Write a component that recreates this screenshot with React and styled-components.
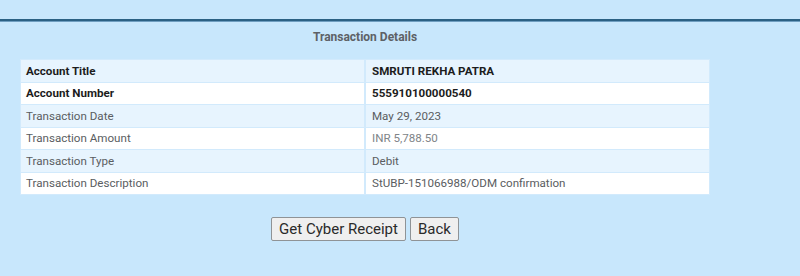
import React from "react";
import styled, { createGlobalStyle } from "styled-components";

const GlobalStyle = createGlobalStyle`
  html, body {
    margin: 0;
    padding: 0;
    background: #c8e7fc;
    font-family: Roboto, "Liberation Sans", Arial, sans-serif;
  }
`;

const Page = styled.div`
  width: 800px;
  height: 276px;
  background: #c8e7fc;
  padding-top: 19px;
  box-sizing: border-box;
`;

// 상단 구분선
const Divider = styled.div`
  height: 2px;
  background: #2b6184;
  border-bottom: 1px solid #6f9ec0;
`;

const Content = styled.div`
  width: 730px;
  padding: 0 20px;
  box-sizing: border-box;
  display: flex;
  flex-direction: column;
  align-items: center;
`;

const Title = styled.h3`
  margin: 7px 0 0;
  height: 16px;
  line-height: 16px;
  font-size: 12px;
  font-weight: 700;
  color: #5d6166;
`;

const Table = styled.table`
  margin-top: 14px;
  width: 690px;
  border-collapse: collapse;
  background: #fff;
  font-size: 11.6px;
`;

const Row = styled.tr`
  background: ${(props) => (props.$shaded ? "#e7f4fe" : "#ffffff")};
`;

const Cell = styled.td`
  width: 50%;
  height: 22.5px;
  padding: 0 5px;
  box-sizing: border-box;
  border: 1px solid #d2eafc;
  border-left-width: ${(props) => (props.$value ? "2px" : "1px")};
  padding-left: ${(props) => (props.$value ? "6px" : "5px")};
  font-weight: ${(props) => (props.$bold ? 700 : 400)};
  color: ${(props) => props.$color || (props.$bold ? "#1c1c1c" : "#5a5d61")};
  white-space: nowrap;
`;

const Actions = styled.div`
  margin-top: 22px;
  display: flex;
  gap: 4px;
`;

const Button = styled.button`
  height: 24px;
  padding: 0 7px;
  font-family: Roboto, "Liberation Sans", Arial, sans-serif;
  font-size: 15px;
  color: #2a2a2a;
  background: #efefef;
  border: 1px solid #8f9396;
  border-radius: 2px;
  cursor: pointer;
`;

const rows = [
  { label: "Account Title", value: "SMRUTI REKHA PATRA", bold: true },
  { label: "Account Number", value: "555910100000540", bold: true },
  { label: "Transaction Date", value: "May 29, 2023" },
  { label: "Transaction Amount", value: "INR 5,788.50", valueColor: "#808488" },
  { label: "Transaction Type", value: "Debit" },
  { label: "Transaction Description", value: "StUBP-151066988/ODM confirmation" },
];

export default function App() {
  return (
    <>
      <GlobalStyle />
      <Page>
        <Divider />
        <Content>
          <Title>Transaction Details</Title>
          <Table>
            <tbody>
              {rows.map((r, i) => (
                <Row key={r.label} $shaded={i % 2 === 0}>
                  <Cell $bold={r.bold}>{r.label}</Cell>
                  <Cell $value $bold={r.bold} $color={r.valueColor}>
                    {r.value}
                  </Cell>
                </Row>
              ))}
            </tbody>
          </Table>
          <Actions>
            <Button>Get Cyber Receipt</Button>
            <Button>Back</Button>
          </Actions>
        </Content>
      </Page>
    </>
  );
}
